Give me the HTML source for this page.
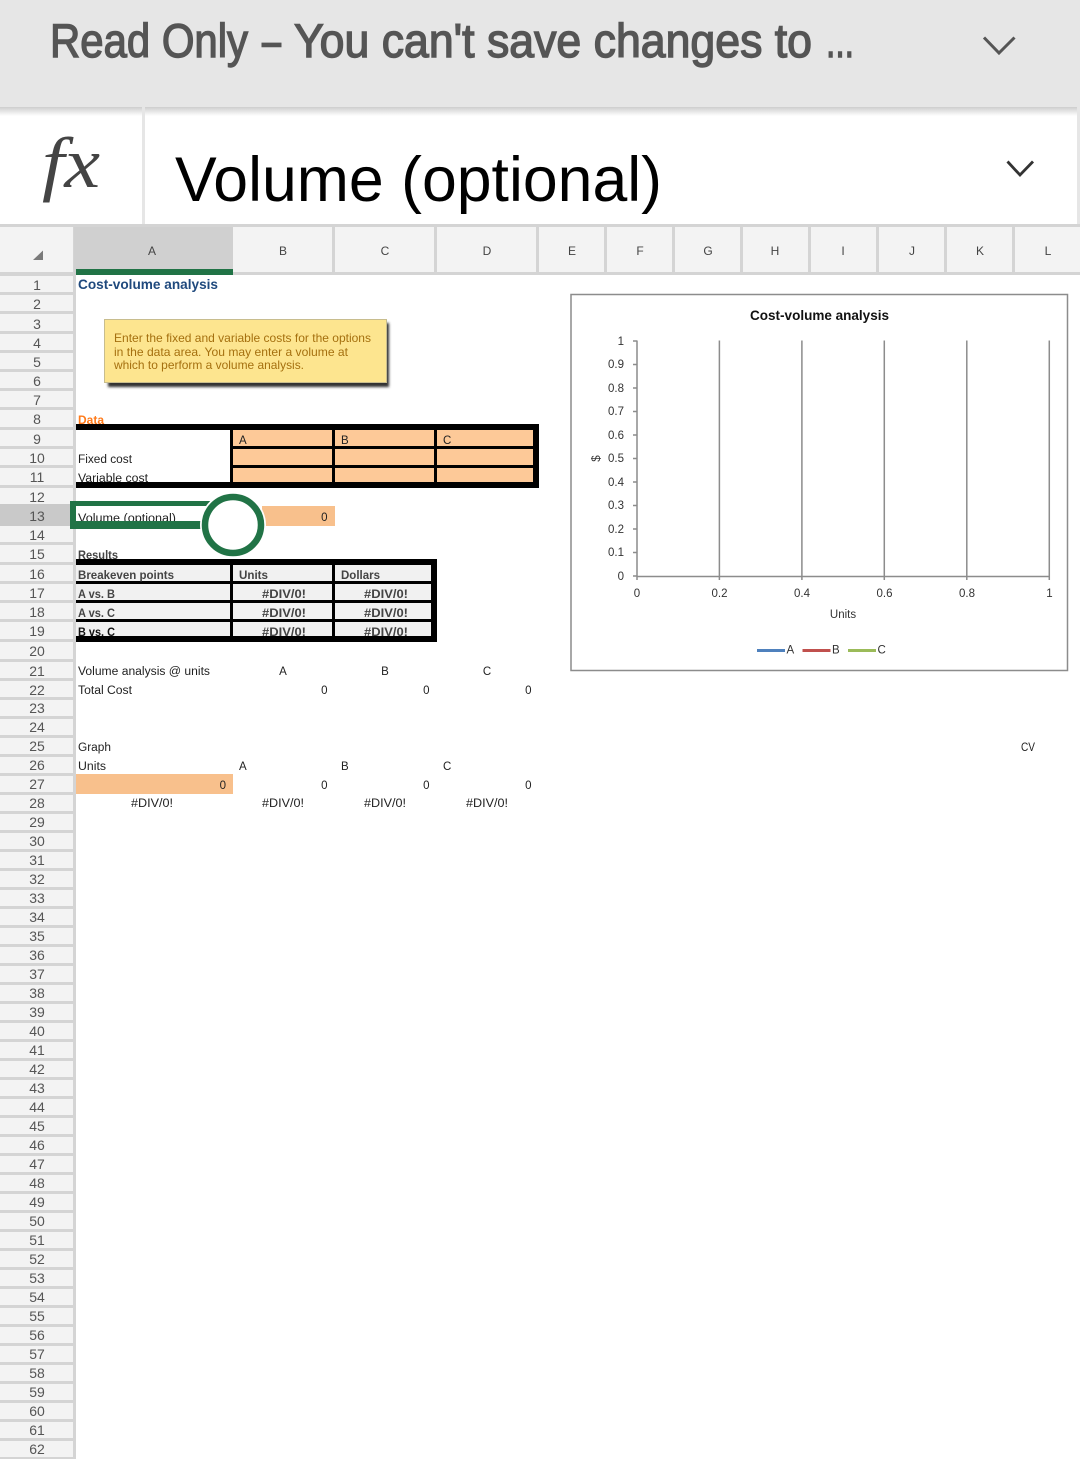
<!DOCTYPE html>
<html><head><meta charset="utf-8"><style>
html,body{margin:0;padding:0;background:#fff;width:1080px;height:1459px;overflow:hidden}
svg{display:block}
text{font-family:"Liberation Sans",sans-serif}
.r text,text.r{font-size:14px;fill:#555;text-anchor:middle}
.c text{font-size:12px;fill:#444;text-anchor:middle}
.d text{font-size:11.5px;fill:#222}
.m text{text-anchor:middle}
.e text{text-anchor:end}
.b text{font-size:11.5px;fill:#444;font-weight:bold}
.n text{font-size:12px;fill:#a5700f}
.t text{font-size:11.5px;fill:#333}
.h text{font-size:47px;fill:#555;stroke:#555;stroke-width:1.4px}
</style></head><body>
<svg xmlns="http://www.w3.org/2000/svg" width="1080" height="1459" viewBox="0 0 1080 1459">
<defs>
<linearGradient id="sh" x1="0" y1="0" x2="0" y2="1"><stop offset="0" stop-color="#bdbdbd"/><stop offset="1" stop-color="#fff"/></linearGradient>
<filter id="bl" x="-5%" y="-10%" width="110%" height="120%"><feGaussianBlur stdDeviation="1.2"/></filter>
</defs>
<rect width="1080" height="1459" fill="#fff"/>
<!-- formula bar -->
<rect x="0" y="107" width="1080" height="9" fill="url(#sh)" opacity=".75"/>
<rect x="142" y="107" width="3" height="118" fill="#e6e6e6"/>
<rect x="1077" y="107" width="3" height="118" fill="#e6e6e6"/>
<rect width="1080" height="107" fill="#e6e6e6"/>
<g class="h">
<text x="50" y="57" textLength="198" lengthAdjust="spacingAndGlyphs">Read Only</text>
<text x="262" y="57" textLength="19" lengthAdjust="spacingAndGlyphs">–</text>
<text x="294" y="57" textLength="518" lengthAdjust="spacingAndGlyphs">You can't save changes to</text>
<text x="826" y="57" textLength="28" lengthAdjust="spacingAndGlyphs">...</text>
</g>
<path d="M984 37.500L999 53L1014.500 37.500" fill="none" stroke="#555" stroke-width="3"/>
<text x="42" y="187" style="font-family:'Liberation Serif',serif" font-style="italic" font-size="72" fill="#444" textLength="58" lengthAdjust="spacingAndGlyphs">fx</text>
<text x="175" y="201" font-size="63" fill="#000" textLength="487" lengthAdjust="spacingAndGlyphs">Volume (optional)</text>
<path d="M1007.500 161.500L1020 175L1033 161.500" fill="none" stroke="#333" stroke-width="2.800"/>
<!-- column headers -->
<rect x="0" y="224" width="1080" height="51" fill="#d4d4d4"/>
<rect x="0" y="227" width="73" height="45" fill="#f3f3f3"/>
<rect x="74" y="227" width="159" height="48" fill="#d0d0d0"/>
<rect x="233" y="227" width="99" height="45" fill="#f3f3f3"/>
<rect x="335" y="227" width="99" height="45" fill="#f3f3f3"/>
<rect x="437" y="227" width="99" height="45" fill="#f3f3f3"/>
<rect x="539" y="227" width="65" height="45" fill="#f3f3f3"/>
<rect x="607" y="227" width="65" height="45" fill="#f3f3f3"/>
<rect x="675" y="227" width="65" height="45" fill="#f3f3f3"/>
<rect x="743" y="227" width="65" height="45" fill="#f3f3f3"/>
<rect x="811" y="227" width="65" height="45" fill="#f3f3f3"/>
<rect x="879" y="227" width="65" height="45" fill="#f3f3f3"/>
<rect x="947" y="227" width="65" height="45" fill="#f3f3f3"/>
<rect x="1015" y="227" width="65" height="45" fill="#f3f3f3"/>
<rect x="76" y="269" width="157" height="6" fill="#217346"/>
<path d="M43 250.500V260H33Z" fill="#7a7a7a"/>
<g class="c">
<text x="152" y="255">A</text><text x="283" y="255">B</text><text x="385" y="255">C</text><text x="487" y="255">D</text><text x="572" y="255">E</text><text x="640" y="255">F</text><text x="708" y="255">G</text><text x="775" y="255">H</text><text x="843" y="255">I</text><text x="912" y="255">J</text><text x="980" y="255">K</text><text x="1048" y="255">L</text>
</g>
<!-- row headers -->
<rect x="0" y="275" width="76" height="1184" fill="#d4d4d4"/>
<g fill="#f3f3f3">
<rect y="276" width="73" height="16"/><rect y="295" width="73" height="16"/><rect y="314" width="73" height="17"/><rect y="334" width="73" height="16"/><rect y="353" width="73" height="16"/><rect y="372" width="73" height="16"/><rect y="391" width="73" height="16"/><rect y="410" width="73" height="17"/><rect y="430" width="73" height="16"/><rect y="449" width="73" height="16"/><rect y="468" width="73" height="17"/><rect y="488" width="73" height="16"/><rect y="526" width="73" height="16"/><rect y="545" width="73" height="17"/><rect y="565" width="73" height="16"/><rect y="584" width="73" height="16"/><rect y="603" width="73" height="16"/><rect y="622" width="73" height="17"/><rect y="642" width="73" height="17"/><rect y="662" width="73" height="16"/><rect y="681" width="73" height="16"/><rect y="700" width="73" height="16"/><rect y="719" width="73" height="16"/><rect y="738" width="73" height="16"/><rect y="757" width="73" height="16"/><rect y="776" width="73" height="16"/><rect y="795" width="73" height="16"/><rect y="814" width="73" height="16"/><rect y="833" width="73" height="16"/><rect y="852" width="73" height="16"/><rect y="871" width="73" height="16"/><rect y="890" width="73" height="16"/><rect y="909" width="73" height="16"/><rect y="928" width="73" height="16"/><rect y="947" width="73" height="16"/><rect y="966" width="73" height="16"/><rect y="985" width="73" height="16"/><rect y="1004" width="73" height="16"/><rect y="1023" width="73" height="16"/><rect y="1042" width="73" height="16"/><rect y="1061" width="73" height="16"/><rect y="1080" width="73" height="16"/><rect y="1099" width="73" height="16"/><rect y="1118" width="73" height="16"/><rect y="1137" width="73" height="16"/><rect y="1156" width="73" height="16"/><rect y="1175" width="73" height="16"/><rect y="1194" width="73" height="16"/><rect y="1213" width="73" height="16"/><rect y="1232" width="73" height="16"/><rect y="1251" width="73" height="16"/><rect y="1270" width="73" height="16"/><rect y="1289" width="73" height="16"/><rect y="1308" width="73" height="16"/><rect y="1327" width="73" height="16"/><rect y="1346" width="73" height="16"/><rect y="1365" width="73" height="16"/><rect y="1384" width="73" height="16"/><rect y="1403" width="73" height="16"/><rect y="1422" width="73" height="16"/><rect y="1441" width="73" height="16"/>
</g>
<rect y="504" width="76" height="22" fill="#c9c9c9"/>
<g class="r">
<text x="37" y="290">1</text><text x="37" y="309">2</text><text x="37" y="329">3</text><text x="37" y="348">4</text><text x="37" y="367">5</text><text x="37" y="386">6</text><text x="37" y="405">7</text><text x="37" y="424">8</text><text x="37" y="444">9</text><text x="37" y="463">10</text><text x="37" y="482">11</text><text x="37" y="502">12</text><text x="37" y="521">13</text><text x="37" y="540">14</text><text x="37" y="559">15</text><text x="37" y="579">16</text><text x="37" y="598">17</text><text x="37" y="617">18</text><text x="37" y="636">19</text><text x="37" y="656">20</text><text x="37" y="676">21</text><text x="37" y="695">22</text><text x="37" y="713">23</text><text x="37" y="732">24</text><text x="37" y="751">25</text><text x="37" y="770">26</text><text x="37" y="789">27</text><text x="37" y="808">28</text><text x="37" y="827">29</text><text x="37" y="846">30</text><text x="37" y="865">31</text><text x="37" y="884">32</text><text x="37" y="903">33</text><text x="37" y="922">34</text><text x="37" y="941">35</text><text x="37" y="960">36</text><text x="37" y="979">37</text><text x="37" y="998">38</text><text x="37" y="1017">39</text><text x="37" y="1036">40</text><text x="37" y="1055">41</text><text x="37" y="1074">42</text><text x="37" y="1093">43</text><text x="37" y="1112">44</text><text x="37" y="1131">45</text><text x="37" y="1150">46</text><text x="37" y="1169">47</text><text x="37" y="1188">48</text><text x="37" y="1207">49</text><text x="37" y="1226">50</text><text x="37" y="1245">51</text><text x="37" y="1264">52</text><text x="37" y="1283">53</text><text x="37" y="1302">54</text><text x="37" y="1321">55</text><text x="37" y="1340">56</text><text x="37" y="1359">57</text><text x="37" y="1378">58</text><text x="37" y="1397">59</text><text x="37" y="1416">60</text><text x="37" y="1435">61</text><text x="37" y="1454">62</text>
</g>
<!-- sheet -->
<text x="78" y="289" font-size="14" font-weight="bold" fill="#1f497d" textLength="140" lengthAdjust="spacingAndGlyphs">Cost-volume analysis</text>
<!-- note -->
<rect x="108" y="323" width="281" height="64" fill="#333" filter="url(#bl)"/>
<rect x="104.500" y="319.500" width="282" height="63" fill="#fde58f" stroke="#c8bd8e"/>
<g class="n">
<text x="114" y="342" textLength="257" lengthAdjust="spacingAndGlyphs">Enter the fixed and variable costs for the options</text>
<text x="114" y="356" textLength="234" lengthAdjust="spacingAndGlyphs">in the data area. You may enter a volume at</text>
<text x="114" y="369" textLength="190" lengthAdjust="spacingAndGlyphs">which to perform a volume analysis.</text>
</g>
<!-- data -->
<text x="78" y="424" font-size="12" font-weight="bold" fill="#ff7a1a" textLength="26" lengthAdjust="spacingAndGlyphs">Data</text>
<g class="d">
<text x="78" y="463" textLength="54" lengthAdjust="spacingAndGlyphs">Fixed cost</text>
<text x="78" y="482" textLength="70" lengthAdjust="spacingAndGlyphs">Variable cost</text>
</g>
<rect x="76" y="424" width="463" height="6" fill="#000"/>
<rect x="76" y="482" width="463" height="6" fill="#000"/>
<rect x="533" y="424" width="6" height="64" fill="#000"/>
<rect x="230" y="424" width="303" height="64" fill="#000"/>
<g fill="#fdc998">
<rect x="233" y="430" width="99" height="16"/><rect x="335" y="430" width="99" height="16"/><rect x="437" y="430" width="96" height="16"/>
<rect x="233" y="449" width="99" height="16"/><rect x="335" y="449" width="99" height="16"/><rect x="437" y="449" width="96" height="16"/>
<rect x="233" y="468" width="99" height="14"/><rect x="335" y="468" width="99" height="14"/><rect x="437" y="468" width="96" height="14"/>
</g>
<g class="d"><text x="239" y="444">A</text><text x="341" y="444">B</text><text x="443" y="444">C</text></g>
<!-- volume -->
<rect x="262" y="506" width="73" height="20" fill="#f8c08c"/>
<g class="d e"><text x="327.500" y="521">0</text></g>
<g class="d"><text x="78" y="522" textLength="98" lengthAdjust="spacingAndGlyphs">Volume (optional)</text></g>
<rect x="76" y="521" width="140" height="8" fill="#fff"/>
<rect x="70" y="501" width="140" height="5" fill="#217346"/>
<rect x="70" y="521" width="140" height="8" fill="#217346"/>
<rect x="70" y="501" width="6" height="28" fill="#217346"/>
<!-- results -->
<text x="78" y="559" font-size="11.500" font-weight="bold" fill="#444" textLength="40" lengthAdjust="spacingAndGlyphs">Results</text>
<rect x="76" y="559" width="361" height="83" fill="#000"/>
<g fill="#f1f1f1">
<rect x="76" y="565" width="154" height="16"/><rect x="233" y="565" width="99" height="16"/><rect x="335" y="565" width="96" height="16"/>
<rect x="76" y="584" width="154" height="16"/><rect x="233" y="584" width="99" height="16"/><rect x="335" y="584" width="96" height="16"/>
<rect x="76" y="603" width="154" height="16"/><rect x="233" y="603" width="99" height="16"/><rect x="335" y="603" width="96" height="16"/>
<rect x="76" y="622" width="154" height="14"/><rect x="233" y="622" width="99" height="14"/><rect x="335" y="622" width="96" height="14"/>
</g>
<svg x="76" y="565" width="361" height="71" viewBox="76 565 361 71">
<g class="b">
<text x="78" y="579" textLength="96" lengthAdjust="spacingAndGlyphs">Breakeven points</text>
<text x="239" y="579" textLength="29" lengthAdjust="spacingAndGlyphs">Units</text>
<text x="341" y="579" textLength="39" lengthAdjust="spacingAndGlyphs">Dollars</text>
<text x="78" y="598" textLength="37" lengthAdjust="spacingAndGlyphs">A vs. B</text>
<text x="78" y="617" textLength="37" lengthAdjust="spacingAndGlyphs">A vs. C</text>
<text x="78" y="636" textLength="37" lengthAdjust="spacingAndGlyphs" style="fill:#111">B vs. C</text>
<text x="262" y="598" textLength="44" lengthAdjust="spacingAndGlyphs">#DIV/0!</text>
<text x="364" y="598" textLength="44" lengthAdjust="spacingAndGlyphs">#DIV/0!</text>
<text x="262" y="617" textLength="44" lengthAdjust="spacingAndGlyphs">#DIV/0!</text>
<text x="364" y="617" textLength="44" lengthAdjust="spacingAndGlyphs">#DIV/0!</text>
<text x="262" y="636" textLength="44" lengthAdjust="spacingAndGlyphs">#DIV/0!</text>
<text x="364" y="636" textLength="44" lengthAdjust="spacingAndGlyphs">#DIV/0!</text>
</g>
</svg>
<!-- circle handle -->
<circle cx="233" cy="525" r="33" fill="#fff"/>
<circle cx="233" cy="525" r="28" fill="#fff" stroke="#217346" stroke-width="6.500"/>
<!-- lower -->
<rect x="76" y="774" width="157" height="20" fill="#f8c08c"/>
<g class="d">
<text x="78" y="675" textLength="132" lengthAdjust="spacingAndGlyphs">Volume analysis @ units</text>
<text x="78" y="694" textLength="54" lengthAdjust="spacingAndGlyphs">Total Cost</text>
<text x="78" y="751" textLength="33" lengthAdjust="spacingAndGlyphs">Graph</text>
<text x="78" y="770" textLength="28" lengthAdjust="spacingAndGlyphs">Units</text>
<text x="239" y="770">A</text><text x="341" y="770">B</text><text x="443" y="770">C</text>
<text x="1021" y="751" textLength="14" lengthAdjust="spacingAndGlyphs">CV</text>
</g>
<g class="d">
<text x="283" y="675" text-anchor="middle">A</text><text x="385" y="675" text-anchor="middle">B</text><text x="487" y="675" text-anchor="middle">C</text>
<text x="131" y="807" textLength="42" lengthAdjust="spacingAndGlyphs">#DIV/0!</text><text x="262" y="807" textLength="42" lengthAdjust="spacingAndGlyphs">#DIV/0!</text><text x="364" y="807" textLength="42" lengthAdjust="spacingAndGlyphs">#DIV/0!</text><text x="466" y="807" textLength="42" lengthAdjust="spacingAndGlyphs">#DIV/0!</text>
</g>
<g class="d e">
<text x="327.500" y="694">0</text><text x="429.500" y="694">0</text><text x="531.500" y="694">0</text>
<text x="226" y="789">0</text><text x="327.500" y="789">0</text><text x="429.500" y="789">0</text><text x="531.500" y="789">0</text>
</g>
<!-- chart -->
<rect x="571" y="294.500" width="496.500" height="376" fill="#fff" stroke="#8c8c8c" stroke-width="1.500"/>
<text x="750" y="320" font-size="14" font-weight="bold" fill="#111" textLength="139" lengthAdjust="spacingAndGlyphs">Cost-volume analysis</text>
<g stroke="#8c8c8c" stroke-width="1.500" fill="none">
<path d="M637 340.500V580M719.400 340.500V580M801.900 340.500V580M884.300 340.500V580M966.800 340.500V580M1049.300 340.500V580"/>
<path d="M637 576.500H1049.300"/>
<path d="M633 341H637M633 364.500H637M633 388H637M633 411.500H637M633 435H637M633 458.500H637M633 482H637M633 505.500H637M633 529H637M633 552.500H637M633 576H637"/>
</g>
<g class="t e">
<text x="624" y="345">1</text><text x="624" y="368">0.9</text><text x="624" y="392">0.8</text><text x="624" y="415">0.7</text><text x="624" y="439">0.6</text><text x="624" y="462">0.5</text><text x="624" y="486">0.4</text><text x="624" y="509">0.3</text><text x="624" y="533">0.2</text><text x="624" y="556">0.1</text><text x="624" y="580">0</text>
</g>
<g class="t m">
<text x="637" y="597">0</text><text x="719.500" y="597">0.2</text><text x="802" y="597">0.4</text><text x="884.500" y="597">0.6</text><text x="967" y="597">0.8</text><text x="1049.500" y="597">1</text>
<text x="843" y="618">Units</text>
</g>
<text transform="translate(600 458.500) rotate(-90)" font-size="11.500" fill="#333" text-anchor="middle">$</text>
<rect x="757" y="649" width="28" height="3" fill="#4f81bd"/>
<rect x="802.500" y="649" width="28" height="3" fill="#c0504d"/>
<rect x="848" y="649" width="28" height="3" fill="#9bbb59"/>
<g class="t">
<text x="786.500" y="653.500">A</text><text x="832" y="653.500">B</text><text x="877.500" y="653.500">C</text>
</g>
</svg>
</body></html>
